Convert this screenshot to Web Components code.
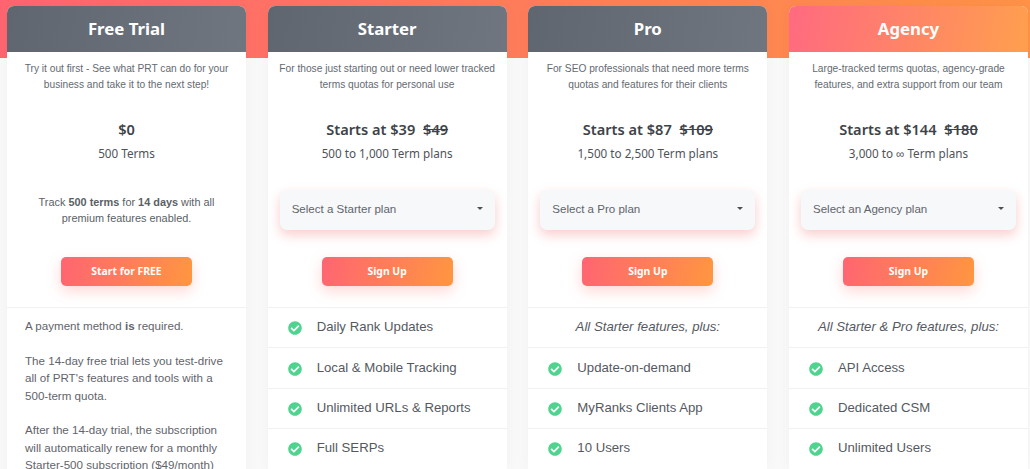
<!DOCTYPE html>
<html>
<head>
<meta charset="utf-8">
<title>Pricing</title>
<style>
    html, body { margin: 0; height: 469px; overflow: hidden; background: #f9f9f9; }
</style>
</head>
<body>
<pricing-page>
    <plan-card name="Free Trial" desc="Try it out first - See what PRT can do for your business and take it to the next step!" price="$0" terms="500 Terms">
        <div slot="action" class="track">Track <b>500 terms</b> for <b>14 days</b> with all premium features enabled.</div>
        <cta-button slot="button">Start for FREE</cta-button>
        <free-note>
            <p>A payment method <b>is</b> required.</p>
            <p>The 14-day free trial lets you test-drive all of PRT's features and tools with a 500-term quota.</p>
            <p>After the 14-day trial, the subscription will automatically renew for a monthly Starter-500 subscription ($49/month)</p>
        </free-note>
    </plan-card>
    <plan-card name="Starter" desc="For those just starting out or need lower tracked terms quotas for personal use" price="Starts at $39" old="$49" terms="500 to 1,000 Term plans">
        <plan-select slot="action">Select a Starter plan</plan-select>
        <cta-button slot="button">Sign Up</cta-button>
        <feature-row check>Daily Rank Updates</feature-row>
        <feature-row check>Local &amp; Mobile Tracking</feature-row>
        <feature-row check>Unlimited URLs &amp; Reports</feature-row>
        <feature-row check>Full SERPs</feature-row>
    </plan-card>
    <plan-card name="Pro" desc="For SEO professionals that need more terms quotas and features for their clients" price="Starts at $87" old="$109" terms="1,500 to 2,500 Term plans">
        <plan-select slot="action">Select a Pro plan</plan-select>
        <cta-button slot="button">Sign Up</cta-button>
        <feature-row>All Starter features, plus:</feature-row>
        <feature-row check>Update-on-demand</feature-row>
        <feature-row check>MyRanks Clients App</feature-row>
        <feature-row check>10 Users</feature-row>
    </plan-card>
    <plan-card featured name="Agency" desc="Large-tracked terms quotas, agency-grade features, and extra support from our team" price="Starts at $144" old="$180" terms="3,000 to ∞ Term plans">
        <plan-select slot="action">Select an Agency plan</plan-select>
        <cta-button slot="button">Sign Up</cta-button>
        <feature-row>All Starter &amp; Pro features, plus:</feature-row>
        <feature-row check>API Access</feature-row>
        <feature-row check>Dedicated CSM</feature-row>
        <feature-row check>Unlimited Users</feature-row>
    </plan-card>
</pricing-page>

<script>
class PricingPage extends HTMLElement {
    constructor() {
        super();
        this.attachShadow({ mode: 'open' });
    }

    connectedCallback() {
        this.shadowRoot.innerHTML = `
            <style>
                :host {
                    display: grid;
                    grid-template-columns: repeat(4, 239px);
                    column-gap: 21.67px;
                    align-items: start;
                    padding: 5.7px 0 0 7px;
                    height: 463.3px;
                    overflow: hidden;
                    background: linear-gradient(100deg, #ff6570, #ff9346) 0 0 / 100% 58px no-repeat;
                }
            </style>
            <slot></slot>
        `;
    }
}

class PlanCard extends HTMLElement {
    constructor() {
        super();
        this.attachShadow({ mode: 'open' });
    }

    connectedCallback() {
        const attr = name => this.getAttribute(name) || '';
        const old = attr('old') ? `<s>${attr('old')}</s>` : '';
        this.shadowRoot.innerHTML = `
            <style>
                :host {
                    display: block;
                    background: #fff;
                    border-radius: 7px 7px 0 0;
                    box-shadow: 0 0 16px rgba(0, 0, 0, .035);
                    font-family: "Liberation Sans", Arial, sans-serif;
                    color: #5a5f66;
                }
                header {
                    height: 46.5px;
                    display: flex;
                    align-items: center;
                    justify-content: center;
                    border-radius: 7px 7px 0 0;
                    background: linear-gradient(100deg, #5f6670, #6f767f);
                    color: #fff;
                    font: 700 16.8px/1 "Noto Sans", sans-serif;
                }
                :host([featured]) header {
                    background: linear-gradient(100deg, #ff6a80, #ff9f4e);
                }
                .desc {
                    height: 32px;
                    margin: 8.8px 0 0;
                    padding: 0 8px;
                    font-size: 10.2px;
                    line-height: 16px;
                    text-align: center;
                    color: #646a71;
                }
                .price {
                    margin-top: 24px;
                    height: 24px;
                    font: 600 14.6px/24px "Noto Sans", sans-serif;
                    text-align: center;
                    color: #3e4349;
                }
                .price s { margin-left: 4px; }
                .terms {
                    height: 24px;
                    font: 400 11.7px/24px "Noto Sans", sans-serif;
                    text-align: center;
                    color: #4f5359;
                }
                .action {
                    height: 40px;
                    margin-top: 25px;
                    padding: 0 12px;
                }
                .action ::slotted(.track) {
                    font-size: 10.9px;
                    line-height: 16.5px;
                    text-align: center;
                    padding: 4px 8px 0;
                    color: #5a5f66;
                }
                .button {
                    display: flex;
                    justify-content: center;
                    margin-top: 27px;
                    height: 29px;
                    padding-bottom: 21px;
                    border-bottom: 1px solid #f1f1f1;
                }
            </style>
            <header>${attr('name')}</header>
            <div class="desc">${attr('desc')}</div>
            <div class="price">${attr('price')}${old ? ' ' + old : ''}</div>
            <div class="terms">${attr('terms')}</div>
            <div class="action"><slot name="action"></slot></div>
            <div class="button"><slot name="button"></slot></div>
            <slot></slot>
        `;
    }
}

class PlanSelect extends HTMLElement {
    constructor() {
        super();
        this.attachShadow({ mode: 'open' });
    }

    connectedCallback() {
        this.shadowRoot.innerHTML = `
            <style>
                :host {
                    display: flex;
                    align-items: center;
                    justify-content: space-between;
                    height: 40px;
                    padding: 0 12px 2px;
                    box-sizing: border-box;
                    border-radius: 7px;
                    background: #f7f8fa;
                    box-shadow: 0 5px 12px rgba(240, 100, 100, .32);
                    font: 11.55px "Liberation Sans", Arial, sans-serif;
                    color: #5f646b;
                }
                i {
                    width: 0;
                    height: 0;
                    border: 3.5px solid transparent;
                    border-top: 3.5px solid #495057;
                    border-bottom: 0;
                }
            </style>
            <slot></slot><i></i>
        `;
    }
}

class CtaButton extends HTMLElement {
    constructor() {
        super();
        this.attachShadow({ mode: 'open' });
    }

    connectedCallback() {
        this.shadowRoot.innerHTML = `
            <style>
                :host {
                    display: flex;
                    align-items: center;
                    justify-content: center;
                    width: 131px;
                    height: 29px;
                    border-radius: 5px;
                    background: linear-gradient(100deg, #ff6572, #ff9640);
                    box-shadow: 0 5px 14px rgba(255, 110, 100, .28);
                    color: #fff;
                    font: 700 10.4px "Noto Sans", sans-serif;
                }
            </style>
            <slot></slot>
        `;
    }
}

class FeatureRow extends HTMLElement {
    constructor() {
        super();
        this.attachShadow({ mode: 'open' });
    }

    connectedCallback() {
        const icon = `<svg viewBox="0 0 512 512" width="14" height="14"><path fill="#4fd48f" d="M504 256c0 136.967-111.033 248-248 248S8 392.967 8 256 119.033 8 256 8s248 111.033 248 248zM227.314 387.314l184-184c6.248-6.248 6.248-16.379 0-22.627l-22.627-22.627c-6.248-6.249-16.379-6.249-22.628 0L216 308.118l-70.059-70.059c-6.248-6.248-16.379-6.248-22.628 0l-22.627 22.627c-6.248 6.248-6.248 16.379 0 22.627l104 104c6.249 6.249 16.379 6.249 22.628 0z"/></svg>`;
        this.shadowRoot.innerHTML = `
            <style>
                :host {
                    display: flex;
                    align-items: center;
                    height: 37.4px;
                    padding: 0 0 2px 20px;
                    gap: 15px;
                    border-bottom: 1px solid #f1f1f1;
                    font: 13.2px "Liberation Sans", Arial, sans-serif;
                    color: #55595f;
                }
                :host(:not([check])) {
                    justify-content: center;
                    padding-left: 0;
                    font-style: italic;
                }
                svg { flex: none; margin-top: 3px; }
            </style>
            ${this.hasAttribute('check') ? icon : ''}<slot></slot>
        `;
    }
}

class FreeNote extends HTMLElement {
    constructor() {
        super();
        this.attachShadow({ mode: 'open' });
    }

    connectedCallback() {
        this.shadowRoot.innerHTML = `
            <style>
                :host {
                    display: block;
                    padding: 9px 16px 0 18px;
                    font: 11.6px/17.4px "Liberation Sans", Arial, sans-serif;
                    color: #5f646b;
                }
                ::slotted(p) { margin: 0 0 17.4px; }
            </style>
            <slot></slot>
        `;
    }
}

customElements.define('pricing-page', PricingPage);
customElements.define('plan-card', PlanCard);
customElements.define('plan-select', PlanSelect);
customElements.define('cta-button', CtaButton);
customElements.define('feature-row', FeatureRow);
customElements.define('free-note', FreeNote);
</script>
</body>
</html>
